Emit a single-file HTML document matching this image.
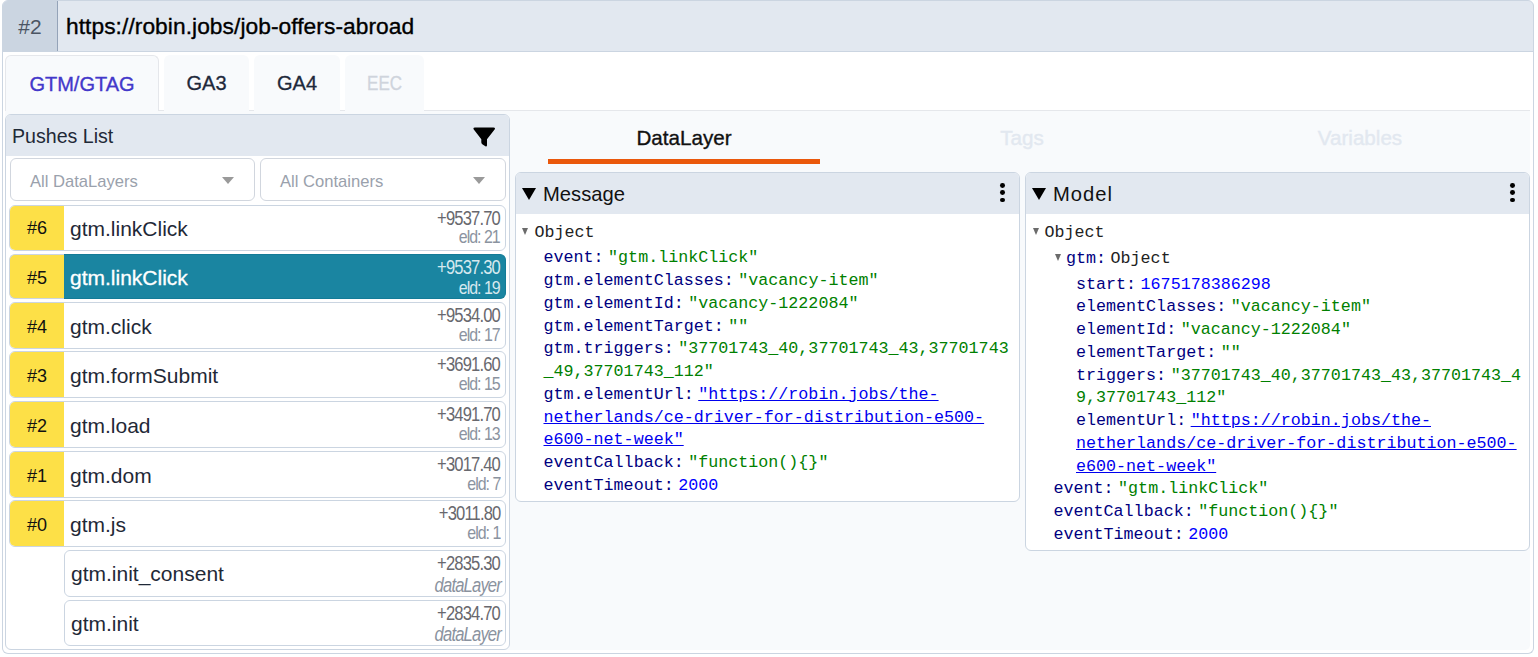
<!DOCTYPE html>
<html><head><meta charset="utf-8">
<style>
*{box-sizing:border-box;margin:0;padding:0}
html,body{width:1538px;height:657px;overflow:hidden;background:#fff;font-family:"Liberation Sans",sans-serif;color:#111}
.abs{position:absolute}
#topbar{left:2px;top:0;width:1532px;height:52px;background:#e2e8f0;border:1px solid #cbd5e1;border-bottom:1px solid #cbd5e1;border-radius:6px 6px 0 0;overflow:hidden}
#num{left:0;top:0;width:55px;height:51px;background:#cbd5e1;border-right:1px solid #94a3b8;color:#4b5563;font-size:21px;text-align:center;line-height:51px}
#url{left:63px;top:0;height:51px;line-height:50px;font-size:22.75px;letter-spacing:0.06px;font-weight:400;color:#000;-webkit-text-stroke:0.35px #000}
#outer{left:2px;top:51px;width:1532px;height:603px;border:1px solid #cbd5e1;border-top:none;border-radius:0 0 6px 6px}
#tabline{left:5px;top:110px;width:1525px;height:1px;background:#e5e7eb}
.tab{top:55px;height:56px;background:#f8fafc;border-radius:6px 6px 0 0;font-size:20px;text-align:center;line-height:57px;color:#1e293b;-webkit-text-stroke:0.3px currentColor}
#content{left:5px;top:111px;width:1525px;height:539px;background:#f8fafc;border-radius:0 0 5px 5px}
#pushes{left:5px;top:114px;width:505px;height:536px;background:#fff;border:1px solid #cbd5e1;border-radius:6px;overflow:hidden}
#phead{left:0;top:0;width:503px;height:41px;background:#e2e8f0;font-size:19.6px;line-height:42px;padding-left:6px;color:#1f2937}
.sel{top:43px;height:43px;background:#fff;border:1px solid #d1d6de;border-radius:6px;font-size:16.6px;color:#9aa1ac;line-height:46px;padding-left:19px}
.caret{position:absolute;top:18px;width:0;height:0;border-left:6.75px solid transparent;border-right:6.75px solid transparent;border-top:7.5px solid #9a9a9a}
.row{left:3px;width:497px;height:45px;border:1px solid #cbd5e1;border-radius:6px;overflow:hidden;background:#fff}
.row .id{position:absolute;left:0;top:0;bottom:0;width:54px;background:#fde047}
.row .id span{position:absolute;left:0;right:0;top:12.3px;font-size:18px;line-height:20px;text-align:center;color:#111}
.row .nm{position:absolute;left:60px;top:12.55px;font-size:21px;line-height:20px;color:#1f2937;white-space:nowrap}
.row.t3 .nm{top:13.6px}
.row.t3 .id span{top:13.6px}
.row.sel5 .id span{top:13.3px}
.row .tm{position:absolute;right:5px;top:1.5px;font-size:19.5px;line-height:20px;color:#68686e;letter-spacing:-1px;text-align:right;transform:scaleX(0.85);transform-origin:right center}
.row .eld{position:absolute;right:5px;bottom:2.6px;font-size:19px;line-height:20px;color:#8b93a0;letter-spacing:-1.2px;text-align:right;transform:scaleX(0.84);transform-origin:right center}
.row.sel5{border:none;overflow:visible;background:transparent}
.row.sel5 .id{width:55px;border:1px solid #cbd5e1;border-right:none;border-radius:6px 0 0 6px}
.row.sel5 .bgt{position:absolute;left:55px;top:0;right:0;bottom:0;background:#1a85a1;border:1px solid #137b97;border-left:none;border-radius:0 6px 6px 0}
.row.sel5 .nm{left:61px;top:13.55px;color:#fff;-webkit-text-stroke:0.3px #fff}
.row.sel5 .tm{right:6px;top:2.5px}
.row.sel5 .eld{right:6px;bottom:1.4px}
.row.sel5 .tm,.row.sel5 .eld{color:#d6e9ef}
.row.nid{left:58px;width:442px}
.row.nid .nm{left:6px}
.row.t3.nid .nm{top:12.6px}
.row.nid .eld{font-style:italic;font-size:20px;bottom:0.9px;letter-spacing:-1px;transform:scaleX(0.83);color:#8a929e;right:4px}
.dtab{top:119px;height:40px;font-size:20.6px;font-weight:400;-webkit-text-stroke:0.35px currentColor;line-height:38px;text-align:center}
#uline{left:548px;top:159px;width:272px;height:5px;background:#ea580c}
.panel{background:#fff;border:1px solid #cbd5e1;border-radius:6px;overflow:hidden}
.ph{position:absolute;left:0;top:0;width:100%;height:41px;background:#e2e8f0;font-size:20.2px;line-height:42px;color:#111;padding-left:27px}
.tri{position:absolute;left:6px;top:15px;width:0;height:0;border-left:7px solid transparent;border-right:7px solid transparent;border-top:12px solid #000}
.kebab{position:absolute;top:10px;width:6px;height:22px}
.kebab i{display:block;width:4.8px;height:4.8px;border-radius:50%;background:#000;margin-bottom:2.5px}
.tree{position:absolute;left:0;top:0;width:100%;height:100%;font-family:"Liberation Mono",monospace;font-size:16.7px;line-height:22.75px;color:#333;white-space:pre}
.ln{position:absolute;white-space:pre}
.k{color:#000080}
.s{color:#008000}
.n{color:#0000ff}
.u{color:#0000ee;text-decoration:underline}
.ar{display:inline-block;width:0;height:0;border-left:3px solid transparent;border-right:3px solid transparent;border-top:7px solid #666;margin-right:5px;vertical-align:1px}
.sp{display:inline-block;width:4.5px}
.o{color:#222}
.ara{position:absolute;width:0;height:0;border-left:3px solid transparent;border-right:3px solid transparent;border-top:7.5px solid #6b6b6b}
</style></head><body>
<div id="topbar" class="abs">
  <div id="num" class="abs">#2</div>
  <div id="url" class="abs">https://robin.jobs/job-offers-abroad</div>
</div>
<div id="outer" class="abs"></div>
<div id="tabline" class="abs"></div>
<div class="abs tab" style="left:5px;width:154px;border:1px solid #e5e7eb;border-bottom:none;color:#4338ca;-webkit-text-stroke:0.35px #4338ca;font-size:20px">GTM/GTAG</div>
<div class="abs tab" style="left:164px;width:85px">GA3</div>
<div class="abs tab" style="left:254px;width:86px">GA4</div>
<div class="abs tab" style="left:345px;width:79px;color:#cfd4dc"><span style="display:inline-block;transform:scaleX(0.85)">EEC</span></div>
<div id="content" class="abs"></div>

<div id="pushes" class="abs">
  <div id="phead" class="abs">Pushes List
    <svg class="abs" style="left:467px;top:12px" width="23" height="21" viewBox="0 0 23 21"><path d="M2 0.6 H20.4 Q22.8 0.6 21.6 2.6 L14 12.2 V18.3 Q14 20 12.4 19.2 L9.6 17.4 Q8.3 16.6 8.3 15.2 V12.2 L0.8 2.6 Q-0.4 0.6 2 0.6 Z" fill="#000"/></svg>
  </div>
  <div class="abs sel" style="left:4px;width:245px">All DataLayers<span class="caret" style="left:210.7px"></span></div>
  <div class="abs sel" style="left:254px;width:246px">All Containers<span class="caret" style="left:211.5px"></span></div>

  <div class="abs row" style="top:90px;height:46px"><div class="id"><span>#6</span></div><div class="nm">gtm.linkClick</div><div class="tm">+9537.70</div><div class="eld">eld: 21</div></div>
  <div class="abs row sel5" style="top:139px;height:45px"><div class="bgt"></div><div class="id"><span>#5</span></div><div class="nm">gtm.linkClick</div><div class="tm">+9537.30</div><div class="eld">eld: 19</div></div>
  <div class="abs row t3" style="top:187px;height:47px"><div class="id"><span>#4</span></div><div class="nm">gtm.click</div><div class="tm">+9534.00</div><div class="eld">eld: 17</div></div>
  <div class="abs row t3" style="top:236px;height:47px"><div class="id"><span>#3</span></div><div class="nm">gtm.formSubmit</div><div class="tm">+3691.60</div><div class="eld">eld: 15</div></div>
  <div class="abs row t3" style="top:286px;height:47px"><div class="id"><span>#2</span></div><div class="nm">gtm.load</div><div class="tm">+3491.70</div><div class="eld">eld: 13</div></div>
  <div class="abs row t3" style="top:336px;height:47px"><div class="id"><span>#1</span></div><div class="nm">gtm.dom</div><div class="tm">+3017.40</div><div class="eld">eld: 7</div></div>
  <div class="abs row t3" style="top:385px;height:47px"><div class="id"><span>#0</span></div><div class="nm">gtm.js</div><div class="tm">+3011.80</div><div class="eld">eld: 1</div></div>
  <div class="abs row t3 nid" style="top:435px;height:47px"><div class="nm">gtm.init_consent</div><div class="tm">+2835.30</div><div class="eld">dataLayer</div></div>
  <div class="abs row t3 nid" style="top:485px;height:46px"><div class="nm">gtm.init</div><div class="tm">+2834.70</div><div class="eld">dataLayer</div></div>
</div>

<div class="abs dtab" style="left:548px;width:272px;color:#111">DataLayer</div>
<div class="abs dtab" style="left:886px;width:272px;color:#e2e8f0">Tags</div>
<div class="abs dtab" style="left:1224px;width:272px;color:#e2e8f0">Variables</div>
<div id="uline" class="abs"></div>

<div class="abs panel" style="left:515px;top:172px;width:505px;height:330px">
  <div class="ph"><span class="tri"></span>Message</div>
  <div class="kebab" style="left:484px"><i></i><i></i><i></i></div>
  <div class="tree" id="msgtree">
<span class="ara" style="left:6px;top:55px"></span>
<div class="ln" style="top:49.00px;left:18.5px"><span class="o">Object</span></div>
<div class="ln" style="top:74.30px;left:27.5px"><span class="k">event:</span><span class="sp"></span><span class="s">"gtm.linkClick"</span></div>
<div class="ln" style="top:97.05px;left:27.5px"><span class="k">gtm.elementClasses:</span><span class="sp"></span><span class="s">"vacancy-item"</span></div>
<div class="ln" style="top:119.80px;left:27.5px"><span class="k">gtm.elementId:</span><span class="sp"></span><span class="s">"vacancy-1222084"</span></div>
<div class="ln" style="top:142.55px;left:27.5px"><span class="k">gtm.elementTarget:</span><span class="sp"></span><span class="s">""</span></div>
<div class="ln" style="top:165.30px;left:27.5px"><span class="k">gtm.triggers:</span><span class="sp"></span><span class="s">"37701743_40,37701743_43,37701743</span></div>
<div class="ln" style="top:188.05px;left:27.5px"><span class="s">_49,37701743_112"</span></div>
<div class="ln" style="top:210.80px;left:27.5px"><span class="k">gtm.elementUrl:</span><span class="sp"></span><span class="u">"https://robin.jobs/the-</span></div>
<div class="ln" style="top:233.55px;left:27.5px"><span class="u">netherlands/ce-driver-for-distribution-e500-</span></div>
<div class="ln" style="top:256.30px;left:27.5px"><span class="u">e600-net-week"</span></div>
<div class="ln" style="top:279.05px;left:27.5px"><span class="k">eventCallback:</span><span class="sp"></span><span class="s">"function(){}"</span></div>
<div class="ln" style="top:301.80px;left:27.5px"><span class="k">eventTimeout:</span><span class="sp"></span><span class="n">2000</span></div>
</div>
</div>

<div class="abs panel" style="left:1025px;top:172px;width:505px;height:379px">
  <div class="ph" style="letter-spacing:1px"><span class="tri"></span>Model</div>
  <div class="kebab" style="left:484px"><i></i><i></i><i></i></div>
  <div class="tree" id="modtree">
<span class="ara" style="left:6.8px;top:55px"></span>
<div class="ln" style="top:48.80px;left:18.5px"><span class="o">Object</span></div>
<span class="ara" style="left:29px;top:81px"></span>
<div class="ln" style="top:75.20px;left:40px"><span class="k">gtm:</span><span class="sp"></span><span class="o">Object</span></div>
<div class="ln" style="top:100.70px;left:50px"><span class="k">start:</span><span class="sp"></span><span class="n">1675178386298</span></div>
<div class="ln" style="top:123.45px;left:50px"><span class="k">elementClasses:</span><span class="sp"></span><span class="s">"vacancy-item"</span></div>
<div class="ln" style="top:146.20px;left:50px"><span class="k">elementId:</span><span class="sp"></span><span class="s">"vacancy-1222084"</span></div>
<div class="ln" style="top:168.95px;left:50px"><span class="k">elementTarget:</span><span class="sp"></span><span class="s">""</span></div>
<div class="ln" style="top:191.70px;left:50px"><span class="k">triggers:</span><span class="sp"></span><span class="s">"37701743_40,37701743_43,37701743_4</span></div>
<div class="ln" style="top:214.45px;left:50px"><span class="s">9,37701743_112"</span></div>
<div class="ln" style="top:237.20px;left:50px"><span class="k">elementUrl:</span><span class="sp"></span><span class="u">"https://robin.jobs/the-</span></div>
<div class="ln" style="top:259.95px;left:50px"><span class="u">netherlands/ce-driver-for-distribution-e500-</span></div>
<div class="ln" style="top:282.70px;left:50px"><span class="u">e600-net-week"</span></div>
<div class="ln" style="top:305.45px;left:27.5px"><span class="k">event:</span><span class="sp"></span><span class="s">"gtm.linkClick"</span></div>
<div class="ln" style="top:328.20px;left:27.5px"><span class="k">eventCallback:</span><span class="sp"></span><span class="s">"function(){}"</span></div>
<div class="ln" style="top:350.95px;left:27.5px"><span class="k">eventTimeout:</span><span class="sp"></span><span class="n">2000</span></div>
</div>
</div>
</body></html>
